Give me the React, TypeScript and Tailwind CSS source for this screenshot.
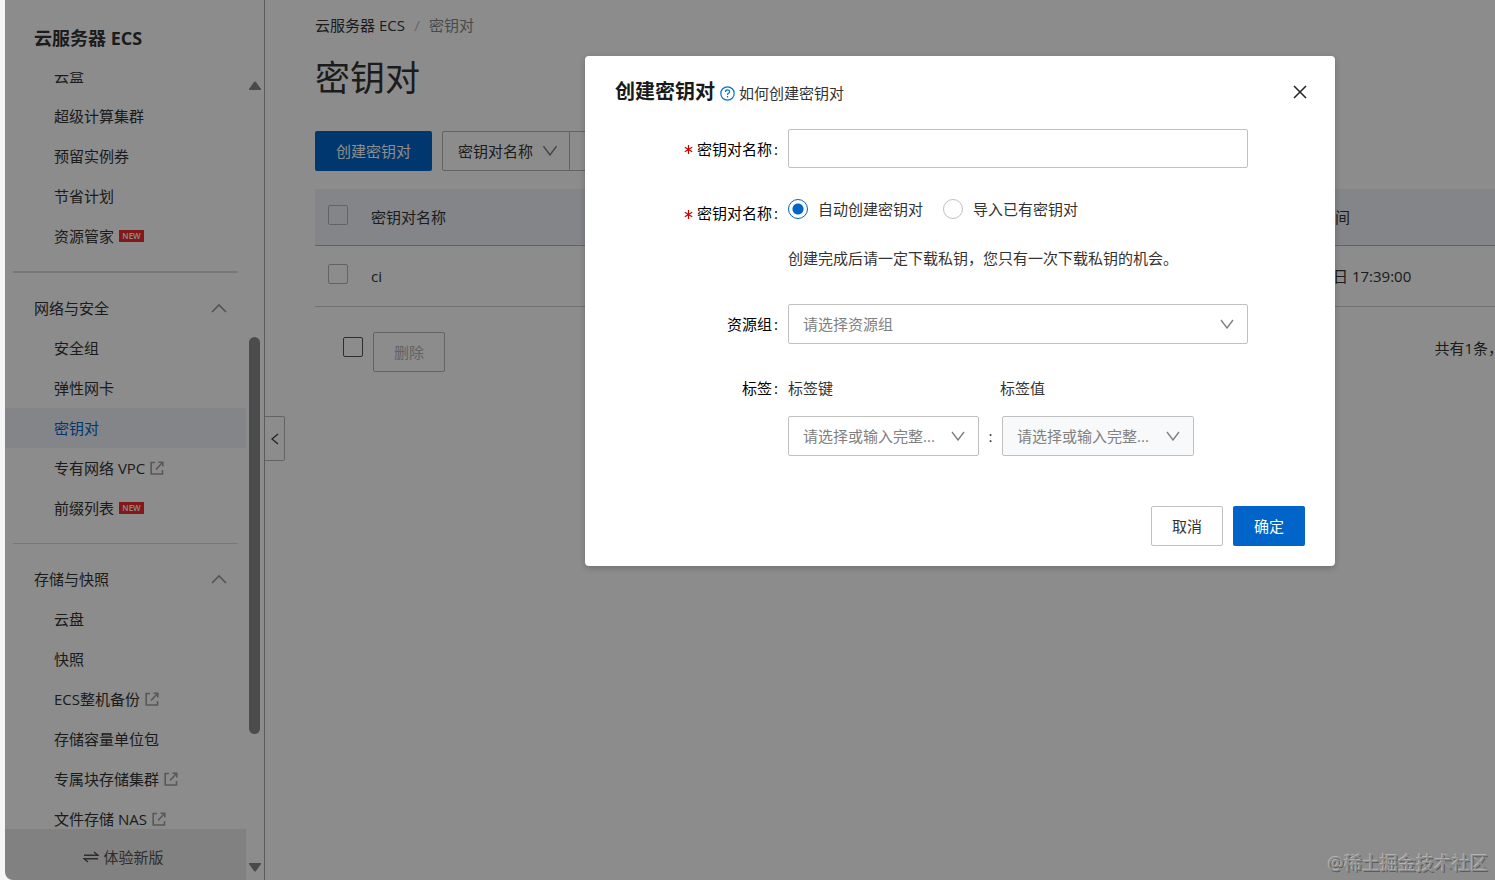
import type { ReactNode } from "react"
import clsx from "clsx"

type NavItem = { label: string; badge?: boolean; external?: boolean; active?: boolean }
type NavGroup = { title?: string; items: NavItem[] }

const groups: NavGroup[] = [
  {
    items: [
      { label: "云盒" },
      { label: "超级计算集群" },
      { label: "预留实例券" },
      { label: "节省计划" },
      { label: "资源管家", badge: true },
    ],
  },
  {
    title: "网络与安全",
    items: [
      { label: "安全组" },
      { label: "弹性网卡" },
      { label: "密钥对", active: true },
      { label: "专有网络 VPC", external: true },
      { label: "前缀列表", badge: true },
    ],
  },
  {
    title: "存储与快照",
    items: [
      { label: "云盘" },
      { label: "快照" },
      { label: "ECS整机备份", external: true },
      { label: "存储容量单位包" },
      { label: "专属块存储集群", external: true },
      { label: "文件存储 NAS", external: true },
    ],
  },
]

function Chevron({ className }: { className?: string }) {
  return (
    <svg viewBox="0 0 14 10" fill="none" stroke="currentColor" strokeWidth="1.4" className={className}>
      <path d="M1 1l6 8 6-8" />
    </svg>
  )
}

function ExternalIcon() {
  return (
    <svg viewBox="0 0 14 14" fill="none" stroke="currentColor" strokeWidth="1.6" className="size-[14px] text-[#a0a0a0]">
      <path d="M5 1.500H1.200V13h11.300V9" />
      <path d="M6 8.500L12.500 1.500M8.500 1.300h4.300v4.200" />
    </svg>
  )
}

function Sidebar() {
  return (
    <aside className="relative flex w-[260px] shrink-0 flex-col border-r border-[#a8a8a8]">
      <h2 className="flex h-[72px] shrink-0 items-center pt-1 pl-[29px] text-lg font-bold">云服务器 ECS</h2>

      <div className="flex min-h-0 flex-1">
        <div className="flex min-w-0 flex-1 flex-col">
          <nav className="min-h-0 flex-1 overflow-hidden">
            <div className="-mt-4">
              {groups.map((group, i) => (
                <div key={i}>
                  {i > 0 && (
                    <hr className={clsx("mx-2 my-[15px] border-[#dadada]", i === 1 ? "border-t-2" : "border-t")} />
                  )}
                  {group.title && (
                    <button type="button" className="flex h-10 w-full items-center justify-between pr-[19px] pl-[29px]">
                      {group.title}
                      <svg viewBox="0 0 16 10" fill="none" stroke="#999" strokeWidth="1.600" className="h-[10px] w-4">
                        <path d="M1 9l7-7 7 7" />
                      </svg>
                    </button>
                  )}
                  <ul>
                    {group.items.map((item) => (
                      <li key={item.label}>
                        <a
                          href="#"
                          className={clsx(
                            "flex h-10 items-center pl-[49px]",
                            item.active && "bg-[#eff3f8] text-[#0064c8]",
                          )}
                        >
                          {item.label}
                          {item.badge && (
                            <span className="ml-[5px] flex h-3 w-[25px] items-center justify-center bg-[#ee2c2c] text-[8px] leading-3 font-semibold text-white">
                              NEW
                            </span>
                          )}
                          {item.external && (
                            <span className="ml-[5px]">
                              <ExternalIcon />
                            </span>
                          )}
                        </a>
                      </li>
                    ))}
                  </ul>
                </div>
              ))}
            </div>
          </nav>
          <button
            type="button"
            className="flex h-[51px] shrink-0 items-center justify-center gap-1 bg-[#ebebeb] pt-1 pr-1 text-[#555]"
          >
            <svg viewBox="0 0 16 12" fill="none" stroke="currentColor" strokeWidth="1.400" className="h-3 w-4">
              <path d="M1 4.300h14L11 1M15 7.700H1L5 11" />
            </svg>
            体验新版
          </button>
        </div>

        <div className="flex w-[18px] shrink-0 flex-col items-center pt-[9px] pr-[1px] pb-2">
          <svg viewBox="0 0 12 9" className="h-[9px] w-3 fill-[#888]">
            <path d="M5 1q1-1 2 0l5 7v1H0V8z" />
          </svg>
          <div className="grow-[247]" />
          <div className="w-[11px] grow-[396] rounded-full bg-[#8b8b8b]" />
          <div className="grow-[129]" />
          <svg viewBox="0 0 12 9" className="h-[9px] w-3 fill-[#888]">
            <path d="M5 8q1 1 2 0l5-7V0H0v1z" />
          </svg>
        </div>
      </div>

      <button
        type="button"
        aria-label="收起"
        className="absolute top-[416px] left-full ml-px flex h-[45px] w-5 items-center justify-center rounded-r-xs border border-l-0 border-[#b4b4b4] bg-white"
      >
        <svg viewBox="0 0 8 12" fill="none" stroke="#444" strokeWidth="1.300" className="h-3 w-2">
          <path d="M7 1L1 6l6 5" />
        </svg>
      </button>
    </aside>
  )
}

function Checkbox({ label, className }: { label: string; className?: string }) {
  return (
    <input
      type="checkbox"
      aria-label={label}
      className={clsx("block size-5 appearance-none rounded-xs border", className)}
    />
  )
}

function KeyPairPage() {
  return (
    <main className="min-w-0 flex-1 overflow-hidden pl-[50px]">
      <nav className="flex h-[50px] items-center">
        <a href="#">云服务器 ECS</a>
        <span className="w-6 text-center text-[#c0c0c0]">/</span>
        <span className="text-[#888]">密钥对</span>
      </nav>
      <h1 className="h-[56px] text-[35px] leading-[56px]">密钥对</h1>

      <div className="mt-[25px] flex h-10">
        <button type="button" className="w-[117px] rounded-xs bg-[#0064c8] text-white">
          创建密钥对
        </button>
        <div className="relative ml-[10px]">
          <select
            aria-label="筛选条件"
            className="h-10 w-32 appearance-none rounded-l-xs border border-[#b4b4b4] pl-[15px] text-[#333]"
          >
            <option>密钥对名称</option>
          </select>
          <Chevron className="pointer-events-none absolute top-[14px] right-3 h-[11px] w-4 text-[#808080]" />
        </div>
        <input aria-label="搜索" className="w-[300px] border border-l-0 border-[#b4b4b4] px-3" />
      </div>

      <table className="mt-[18px] w-full table-fixed text-left">
        <thead>
          <tr className="h-14 border-b border-[#b4b4b4] bg-[#eff3f8]">
            <th className="w-14 rounded-tl-xs pb-1 pl-[13px]">
              <Checkbox label="全选" className="border-[#b4b4b4]" />
            </th>
            <th className="font-normal">密钥对名称</th>
            <th className="w-[162px] pl-[2px] font-normal">间</th>
          </tr>
        </thead>
        <tbody>
          <tr className="h-[61px] border-b border-[#d0d0d0]">
            <td className="pb-1 pl-[13px]">
              <Checkbox label="ci" className="border-[#b4b4b4]" />
            </td>
            <td>ci</td>
            <td>日 17:39:00</td>
          </tr>
        </tbody>
      </table>

      <div className="mt-[25px] flex items-center">
        <Checkbox label="选择本页" className="mb-[10px] ml-7 border-[#555]" />
        <button
          type="button"
          disabled
          className="ml-[10px] h-10 w-[72px] rounded-xs border border-[#b4b4b4] text-[#b4b4b4]"
        >
          删除
        </button>
        <span className="-mr-2 mb-2 ml-auto whitespace-nowrap">{"共有1条\uff0c"}</span>
      </div>
    </main>
  )
}

function Row({
  label,
  htmlFor,
  required,
  className,
  labelClass,
  children,
}: {
  label: string
  htmlFor?: string
  required?: boolean
  className?: string
  labelClass?: string
  children: ReactNode
}) {
  return (
    <div className={clsx("grid grid-cols-[193px_1fr] gap-x-[10px]", className)}>
      <label htmlFor={htmlFor} className={clsx("flex items-center justify-end text-black", labelClass)}>
        {required && (
          <svg viewBox="0 0 9 9" stroke="#c80000" strokeWidth="1.200" className="mt-[2px] mr-1 size-[9px]">
            <path d="M4.500 0v9M0.800 2.300l7.400 4.400M8.200 2.300L0.800 6.700" />
          </svg>
        )}
        {label}
        <span className="ml-[2px]">:</span>
      </label>
      <div>{children}</div>
    </div>
  )
}

function SelectBox({ id, label, text, className }: { id: string; label?: string; text: string; className?: string }) {
  return (
    <div className="relative">
      <select
        id={id}
        aria-label={label}
        className={clsx("block h-10 appearance-none rounded-xs border border-[#c0c0c0] pl-[14px] text-[#808080]", className)}
      >
        <option>{text}</option>
      </select>
      <Chevron className="pointer-events-none absolute top-[15px] right-[14px] h-[10px] w-[14px] text-[#808080]" />
    </div>
  )
}

function Dialog() {
  return (
    <form
      role="dialog"
      aria-labelledby="dialog-title"
      className="w-[750px] max-w-full rounded-sm bg-white pt-5 pb-5 shadow-[0_2px_6px_rgba(0,0,0,0.2)]"
    >
      <header className="flex h-8 items-center px-[30px]">
        <h2 id="dialog-title" className="text-xl font-bold text-[#1a1a1a]">
          创建密钥对
        </h2>
        <a href="#" className="ml-[5px] flex items-center gap-1 pt-[2px]">
          <svg viewBox="0 0 15 15" fill="none" stroke="#0070cc" strokeWidth="1.200" className="size-[15px]">
            <circle cx="7.500" cy="7.500" r="6.700" />
            <path d="M5.400 6q0-2.200 2.100-2.200T9.600 5.800q0 .9-1.100 1.500-1 .5-1 1.600M7.500 10v1.400" />
          </svg>
          如何创建密钥对
        </a>
        <button type="button" aria-label="关闭" className="-mr-[2px] ml-auto">
          <svg viewBox="0 0 14 14" fill="none" stroke="#222" strokeWidth="1.500" className="size-[14px]">
            <path d="M1 1l12 12M13 1L1 13" />
          </svg>
        </button>
      </header>

      <Row label="密钥对名称" htmlFor="key-name" required className="mt-[21px]">
        <input id="key-name" className="block h-[39px] w-[460px] rounded-xs border border-[#c0c0c0] px-[15px]" />
      </Row>

      <Row label="密钥对名称" htmlFor="mode-auto" required className="mt-6" labelClass="h-[42px]">
        <div className="flex h-[34px] items-center gap-5">
          {["自动创建密钥对", "导入已有密钥对"].map((text, i) => (
            <label key={text} className="flex items-center gap-[10px]">
              <input
                id={i === 0 ? "mode-auto" : "mode-import"}
                type="radio"
                name="mode"
                defaultChecked={i === 0}
                className="size-5 appearance-none rounded-full border border-[#c0c0c0] checked:border-[#0064c8] checked:bg-[radial-gradient(circle,#0064c8_5px,transparent_6px)]"
              />
              {text}
            </label>
          ))}
        </div>
        <p className="mt-4 h-8 leading-8">{"创建完成后请一定下载私钥\uff0c您只有一次下载私钥的机会。"}</p>
      </Row>

      <Row label="资源组" htmlFor="resource-group" className="mt-[30px]">
        <div className="w-[460px]">
          <SelectBox id="resource-group" text="请选择资源组" className="w-full" />
        </div>
      </Row>

      <Row label="标签" htmlFor="tag-key" className="mt-6" labelClass="h-10">
        <div className="flex h-10 items-center">
          <span className="w-[212px]">标签键</span>
          <span>标签值</span>
        </div>
        <div className="mt-2 flex items-center">
          <SelectBox id="tag-key" text="请选择或输入完整..." className="w-[191px]" />
          <span className="w-[23px] text-center">:</span>
          <SelectBox id="tag-value" label="标签值" text="请选择或输入完整..." className="w-48 bg-[#f7f9fa]" />
        </div>
      </Row>

      <footer className="mt-[50px] flex justify-end gap-[10px] pr-[30px]">
        <button type="button" className="h-10 w-[72px] rounded-xs border border-[#c0c0c0]">
          取消
        </button>
        <button type="submit" className="h-10 w-[72px] rounded-xs bg-[#0064c8] text-white">
          确定
        </button>
      </footer>
    </form>
  )
}

export default function App() {
  return (
    <div className="h-screen bg-[#f5f5f5] pl-[5px] font-['Open_Sans','Noto_Sans_CJK_SC',sans-serif] text-[15px] leading-5 text-[#333]">
      <div className="relative flex h-full overflow-hidden rounded-bl-lg bg-white">
        <Sidebar />
        <KeyPairPage />
        <div className="absolute inset-0 flex items-start justify-end bg-black/45 pt-14 pr-40">
          <Dialog />
        </div>
        <p className="absolute right-[7px] bottom-[7px] text-lg leading-5 text-[#8c8c8c] [text-shadow:-1px_-1px_0_#b4b4b4,1px_1px_0_#5c5c5c]">
          @稀土掘金技术社区
        </p>
      </div>
    </div>
  )
}
